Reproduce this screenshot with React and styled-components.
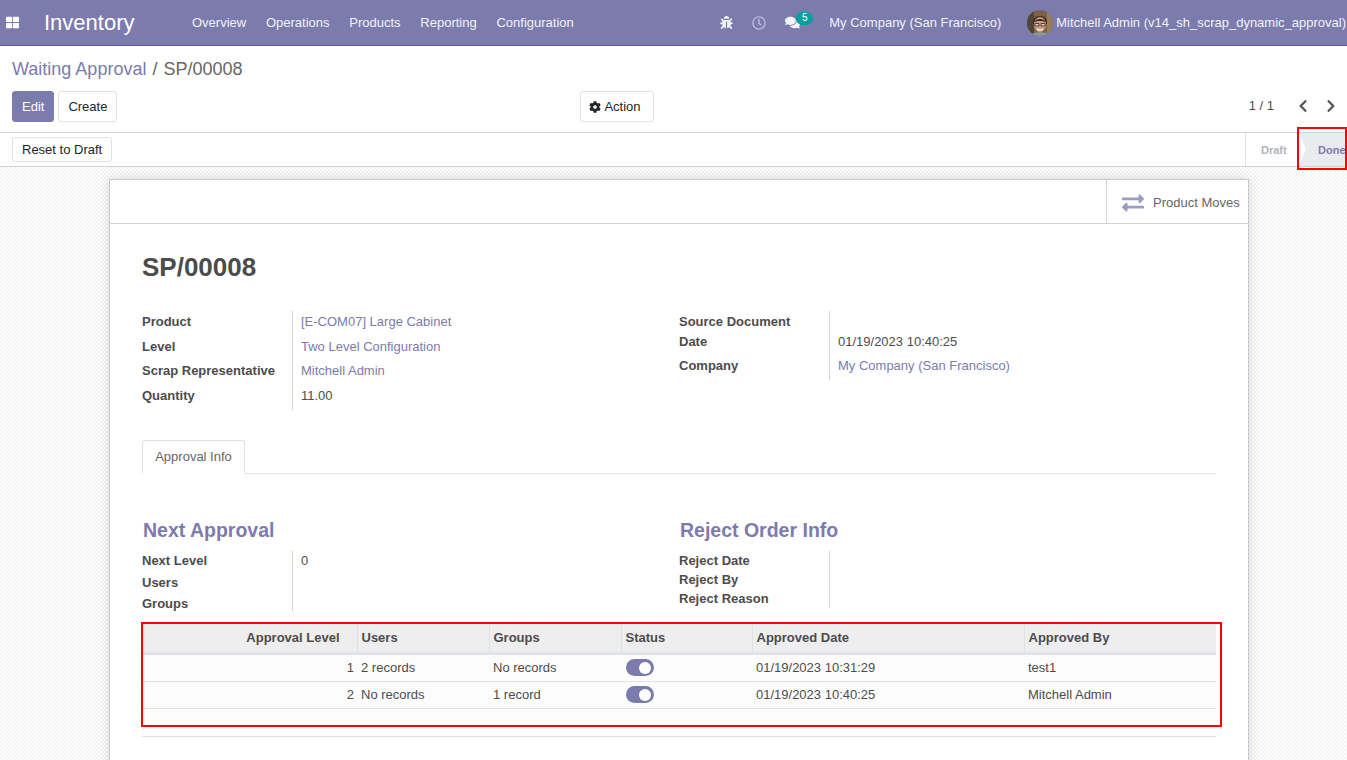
import React from "react";
import styled, { createGlobalStyle } from "styled-components";
import { FaBug, FaRegClock, FaComments, FaThLarge, FaCog, FaExchangeAlt, FaChevronLeft, FaChevronRight } from "react-icons/fa";

const GlobalStyle = createGlobalStyle`
  html, body { margin: 0; padding: 0; height: 100%; overflow: hidden; }
  body { font-family: "Liberation Sans", Arial, sans-serif; font-size: 13px; color: #4c4c4c; background: #fff; }
  * { box-sizing: border-box; }
`;

const PURPLE = "#7c7bad";

const Page = styled.div`
  height: 760px;
  width: 1347px;
  display: flex;
  flex-direction: column;
  overflow: hidden;
  position: relative;
`;
const Navbar = styled.div`
  height: 46px;
  flex: none;
  background: ${PURPLE};
  border-bottom: 1px solid #5f5e97;
  display: flex;
  align-items: center;
  color: #fff;
  padding: 0 1px 0 6px;
`;
const Brand = styled.div`
  font-size: 22px;
  margin-left: 25px;
  width: 148px;
`;
const MenuItem = styled.span`
  margin-right: 19.75px;
  color: #f2f2f7;
`;
const NavRight = styled.div`
  margin-left: auto;
  display: flex;
  align-items: center;
  color: #f2f2f7;
  white-space: nowrap;
`;
const NavIcon = styled.span`
  display: flex;
  position: relative;
  font-size: 13px;
  margin-right: ${(p) => p.$gap}px;
  opacity: ${(p) => (p.$dim ? 0.55 : 1)};
`;
const Badge = styled.span`
  position: absolute;
  left: 11px;
  top: -3px;
  width: 17px;
  height: 13px;
  border-radius: 7px;
  background: #00a09d;
  color: #fff;
  font-size: 10px;
  text-align: center;
  line-height: 12px;
`;
const Avatar = styled.svg`
  width: 26px;
  height: 26px;
  border-radius: 50%;
  margin: 0 3px 0 26px;
`;
const ControlPanel = styled.div`
  height: 87px;
  flex: none;
  border-bottom: 1px solid #ced4da;
  padding: 11px 9px 0 12px;
  background: #fff;
`;
const Breadcrumb = styled.div`
  font-size: 18px;
  line-height: 24px;
  display: flex;
  gap: 6px;
  color: #666;
`;
const CrumbLink = styled.span`
  color: ${PURPLE};
`;
const ActionsRow = styled.div`
  margin-top: 10px;
  display: flex;
  align-items: center;
  height: 31px;
`;
const Button = styled.button`
  font: inherit;
  height: ${(p) => p.$h || 31}px;
  padding: 0 9px;
  border: 1px solid ${(p) => (p.$primary ? PURPLE : "#dee2e6")};
  border-radius: 3px;
  background: ${(p) => (p.$primary ? PURPLE : "#fff")};
  color: ${(p) => (p.$primary ? "#fff" : "#212529")};
  margin-right: 4px;
  display: flex;
  align-items: center;
  gap: 3px;
`;
const ActionButton = styled(Button)`
  padding: 0 12px 0 8px;
  margin-right: 0;
`;
const ActionSlot = styled.div`
  margin-left: 459px;
`;
const Pager = styled.div`
  margin-left: auto;
  padding-bottom: 2px;
  display: flex;
  align-items: center;
  color: #4c4c4c;
`;
const PagerArrow = styled.span`
  display: flex;
  font-size: 14px;
  color: #555;
  margin-left: ${(p) => p.$gap}px;
`;
const StatusBar = styled.div`
  height: 34px;
  flex: none;
  background: #fff;
  border-bottom: 1px solid #ced4da;
  display: flex;
  align-items: center;
  padding-left: 12px;
`;
const StatusSteps = styled.div`
  margin-left: auto;
  height: 33px;
  display: flex;
  font-size: 11px;
  font-weight: 700;
`;
const DraftStep = styled.div`
  width: 54px;
  border-left: 1px solid #dee2e6;
  color: #adb5bd;
  display: flex;
  align-items: center;
  padding-left: 15px;
`;
const DoneStep = styled.div`
  width: 48px;
  position: relative;
  background: #e9ecef;
  color: ${PURPLE};
  display: flex;
  align-items: center;
  padding-left: 19px;
  overflow: hidden;
  white-space: nowrap;
  &:before {
    content: "";
    position: absolute;
    left: 0;
    top: 0;
    border-left: 7px solid #fff;
    border-top: 16.5px solid transparent;
    border-bottom: 16.5px solid transparent;
  }
`;
const Content = styled.div`
  flex: 1;
  min-height: 0;
  padding: 12px 99px 0 109px;
  background-color: #fff;
  background-image: conic-gradient(#f3f3f3 25%, #fff 0 50%, #f3f3f3 0 75%, #fff 0);
  background-size: 4px 4px;
`;
const Sheet = styled.div`
  width: 1140px;
  height: 640px;
  background: #fff;
  border: 1px solid #c8c8d4;
  box-shadow: 0 0 12px rgba(0, 0, 0, 0.14);
`;
const ButtonBox = styled.div`
  height: 44px;
  border-bottom: 1px solid #ced4da;
  display: flex;
  justify-content: flex-end;
`;
const StatButton = styled.div`
  width: 142px;
  border-left: 1px solid #ced4da;
  display: flex;
  align-items: center;
  padding: 2px 0 0 15px;
  gap: 9px;
  color: #666;
  font-size: 13px;
  svg { color: #9c9bc4; font-size: 22px; }
`;
const SheetBody = styled.div`
  padding: 0 32px;
`;
const Title = styled.h1`
  margin: 26px 0 0;
  font-size: 26px;
  line-height: 34px;
  font-weight: 700;
  color: #4c4c4c;
`;
const Columns = styled.div`
  display: grid;
  grid-template-columns: 537px 1fr;
  margin-top: ${(p) => p.$top}px;
`;
const Group = styled.div`
  display: grid;
  grid-template-columns: 150px 1fr;
  align-content: start;
`;
const Label = styled.div`
  font-weight: 700;
  height: ${(p) => p.$h}px;
  display: flex;
  align-items: center;
`;
const Value = styled.div`
  height: ${(p) => p.$h}px;
  border-left: 1px solid #ced4da;
  padding-left: 8px;
  display: flex;
  align-items: center;
  color: ${(p) => (p.$link ? PURPLE : "#4c4c4c")};
`;
const Tabs = styled.div`
  margin-top: 30px;
  height: 34px;
  border-bottom: 1px solid #dee2e6;
  display: flex;
`;
const Tab = styled.div`
  width: 103px;
  height: 34px;
  padding-bottom: 2px;
  border: 1px solid #dee2e6;
  border-bottom: 1px solid #fff;
  border-radius: 3px 3px 0 0;
  background: #fff;
  color: #666;
  display: flex;
  align-items: center;
  justify-content: center;
`;
const Heading = styled.h2`
  margin: 0 0 7px 1px;
  font-size: 19.5px;
  line-height: 28px;
  font-weight: 700;
  color: ${PURPLE};
`;
const TableWrap = styled.div`
  margin-top: 13px;
  padding-left: 1px;
  height: 113px;
  background: #fcfcfc;
  border-bottom: 1px solid #dee2e6;
`;
const Table = styled.table`
  width: 1073px;
  table-layout: fixed;
  border-collapse: collapse;
  tbody tr:first-child td { height: 28px; }
`;
const Th = styled.th`
  height: 29px;
  padding: 0 3px 0 4px;
  background: #eeeeee;
  border-bottom: 3px solid #dee2e6;
  border-left: 1px solid #dee2e6;
  text-align: left;
  font-weight: 700;
  color: #4c4c4c;
  &:first-child { border-left: 0; text-align: right; padding-right: 17px; }
`;
const Td = styled.td`
  height: 27px;
  padding: 0 3px 0 4px;
  border-bottom: 1px solid #dee2e6;
  color: #4c4c4c;
  &:first-child { text-align: right; padding-right: 3px; }
`;
const Toggle = styled.span`
  display: block;
  margin-left: 1px;
  width: 28px;
  height: 17px;
  border-radius: 9px;
  background: ${PURPLE};
  position: relative;
  &:after {
    content: "";
    position: absolute;
    right: 3px;
    top: 2.5px;
    width: 12px;
    height: 12px;
    border-radius: 50%;
    background: #fff;
  }
`;
const RedBox = styled.div`
  position: absolute;
  border: 2px solid #f00;
  left: ${(p) => p.$x}px;
  top: ${(p) => p.$y}px;
  width: ${(p) => p.$w}px;
  height: ${(p) => p.$h}px;
  pointer-events: none;
`;

const rows = [
  { level: 1, users: "2 records", groups: "No records", date: "01/19/2023 10:31:29", by: "test1" },
  { level: 2, users: "No records", groups: "1 record", date: "01/19/2023 10:40:25", by: "Mitchell Admin" },
];

export default function App() {
  return (
    <Page>
      <GlobalStyle />
      <Navbar>
        <FaThLarge size={13} />
        <Brand>Inventory</Brand>
        <MenuItem>Overview</MenuItem>
        <MenuItem>Operations</MenuItem>
        <MenuItem>Products</MenuItem>
        <MenuItem>Reporting</MenuItem>
        <MenuItem>Configuration</MenuItem>
        <NavRight>
          <NavIcon $gap={19}><FaBug /></NavIcon>
          <NavIcon $gap={19} $dim><FaRegClock size={14} /></NavIcon>
          <NavIcon $gap={29}><FaComments size={15} /><Badge>5</Badge></NavIcon>
          My Company (San Francisco)
          <Avatar viewBox="0 0 26 26">
            <rect width="26" height="26" fill="#7a6248" />
            <rect width="7" height="26" fill="#4f4436" />
            <rect x="20" width="6" height="26" fill="#9a7d58" />
            <path d="M6 12C6 4 20 4 20 12v2H6z" fill="#3d2b1f" />
            <ellipse cx="13" cy="14.500" rx="6" ry="7.500" fill="#cf9f80" />
            <path d="M7 12c2-4 10-4 12 0-3-1.500-9-1.500-12 0z" fill="#35251b" />
            <path d="M8 13.500h4v2.500H8zM14 13.500h4v2.500h-4z" fill="#e6cdb8" stroke="#2a2320" strokeWidth="0.8" />
            <path d="M10 19c2 1.500 4 1.500 6 0" stroke="#f5efe8" strokeWidth="1.200" fill="none" />
            <path d="M3 26c1-5 19-5 20 0z" fill="#8f979a" />
          </Avatar>
          Mitchell Admin (v14_sh_scrap_dynamic_approval)
        </NavRight>
      </Navbar>
      <ControlPanel>
        <Breadcrumb><CrumbLink>Waiting Approval</CrumbLink><span>/</span><span>SP/00008</span></Breadcrumb>
        <ActionsRow>
          <Button $primary>Edit</Button>
          <Button>Create</Button>
          <ActionSlot><ActionButton><FaCog size={12} />Action</ActionButton></ActionSlot>
          <Pager>
            1 / 1
            <PagerArrow $gap={22}><FaChevronLeft /></PagerArrow>
            <PagerArrow $gap={14}><FaChevronRight /></PagerArrow>
          </Pager>
        </ActionsRow>
      </ControlPanel>
      <StatusBar>
        <Button $h={25}>Reset to Draft</Button>
        <StatusSteps>
          <DraftStep>Draft</DraftStep>
          <DoneStep>Done</DoneStep>
        </StatusSteps>
      </StatusBar>
      <Content>
        <Sheet>
          <ButtonBox>
            <StatButton><FaExchangeAlt />Product Moves</StatButton>
          </ButtonBox>
          <SheetBody>
            <Title>SP/00008</Title>
            <Columns $top={27}>
              <Group>
                <Label $h={21}>Product</Label><Value $h={21} $link>[E-COM07] Large Cabinet</Value>
                <Label $h={28}>Level</Label><Value $h={28} $link>Two Level Configuration</Value>
                <Label $h={20}>Scrap Representative</Label><Value $h={20} $link>Mitchell Admin</Value>
                <Label $h={30}>Quantity</Label><Value $h={30}>11.00</Value>
              </Group>
              <Group>
                <Label $h={21}>Source Document</Label><Value $h={21} />
                <Label $h={19}>Date</Label><Value $h={19}>01/19/2023 10:40:25</Value>
                <Label $h={29}>Company</Label><Value $h={29} $link>My Company (San Francisco)</Value>
              </Group>
            </Columns>
            <Tabs><Tab>Approval Info</Tab></Tabs>
            <Columns $top={42}>
              <div>
                <Heading>Next Approval</Heading>
                <Group>
                  <Label $h={18}>Next Level</Label><Value $h={18}>0</Value>
                  <Label $h={27}>Users</Label><Value $h={27} />
                  <Label $h={15}>Groups</Label><Value $h={15} />
                </Group>
              </div>
              <div>
                <Heading>Reject Order Info</Heading>
                <Group>
                  <Label $h={19}>Reject Date</Label><Value $h={19} />
                  <Label $h={19}>Reject By</Label><Value $h={19} />
                  <Label $h={19}>Reject Reason</Label><Value $h={19} />
                </Group>
              </div>
            </Columns>
            <TableWrap>
              <Table>
                <colgroup>
                  <col width="214" /><col width="132" /><col width="132" /><col width="131" /><col width="272" /><col width="192" />
                </colgroup>
                <thead>
                  <tr>
                    <Th>Approval Level</Th><Th>Users</Th><Th>Groups</Th><Th>Status</Th><Th>Approved Date</Th><Th>Approved By</Th>
                  </tr>
                </thead>
                <tbody>
                  {rows.map((r) => (
                    <tr key={r.level}>
                      <Td>{r.level}</Td>
                      <Td>{r.users}</Td>
                      <Td>{r.groups}</Td>
                      <Td><Toggle /></Td>
                      <Td>{r.date}</Td>
                      <Td>{r.by}</Td>
                    </tr>
                  ))}
                </tbody>
              </Table>
            </TableWrap>
          </SheetBody>
        </Sheet>
      </Content>
      <RedBox $x={1297} $y={127} $w={50} $h={43} />
      <RedBox $x={141} $y={622} $w={1081} $h={105} />
    </Page>
  );
}
